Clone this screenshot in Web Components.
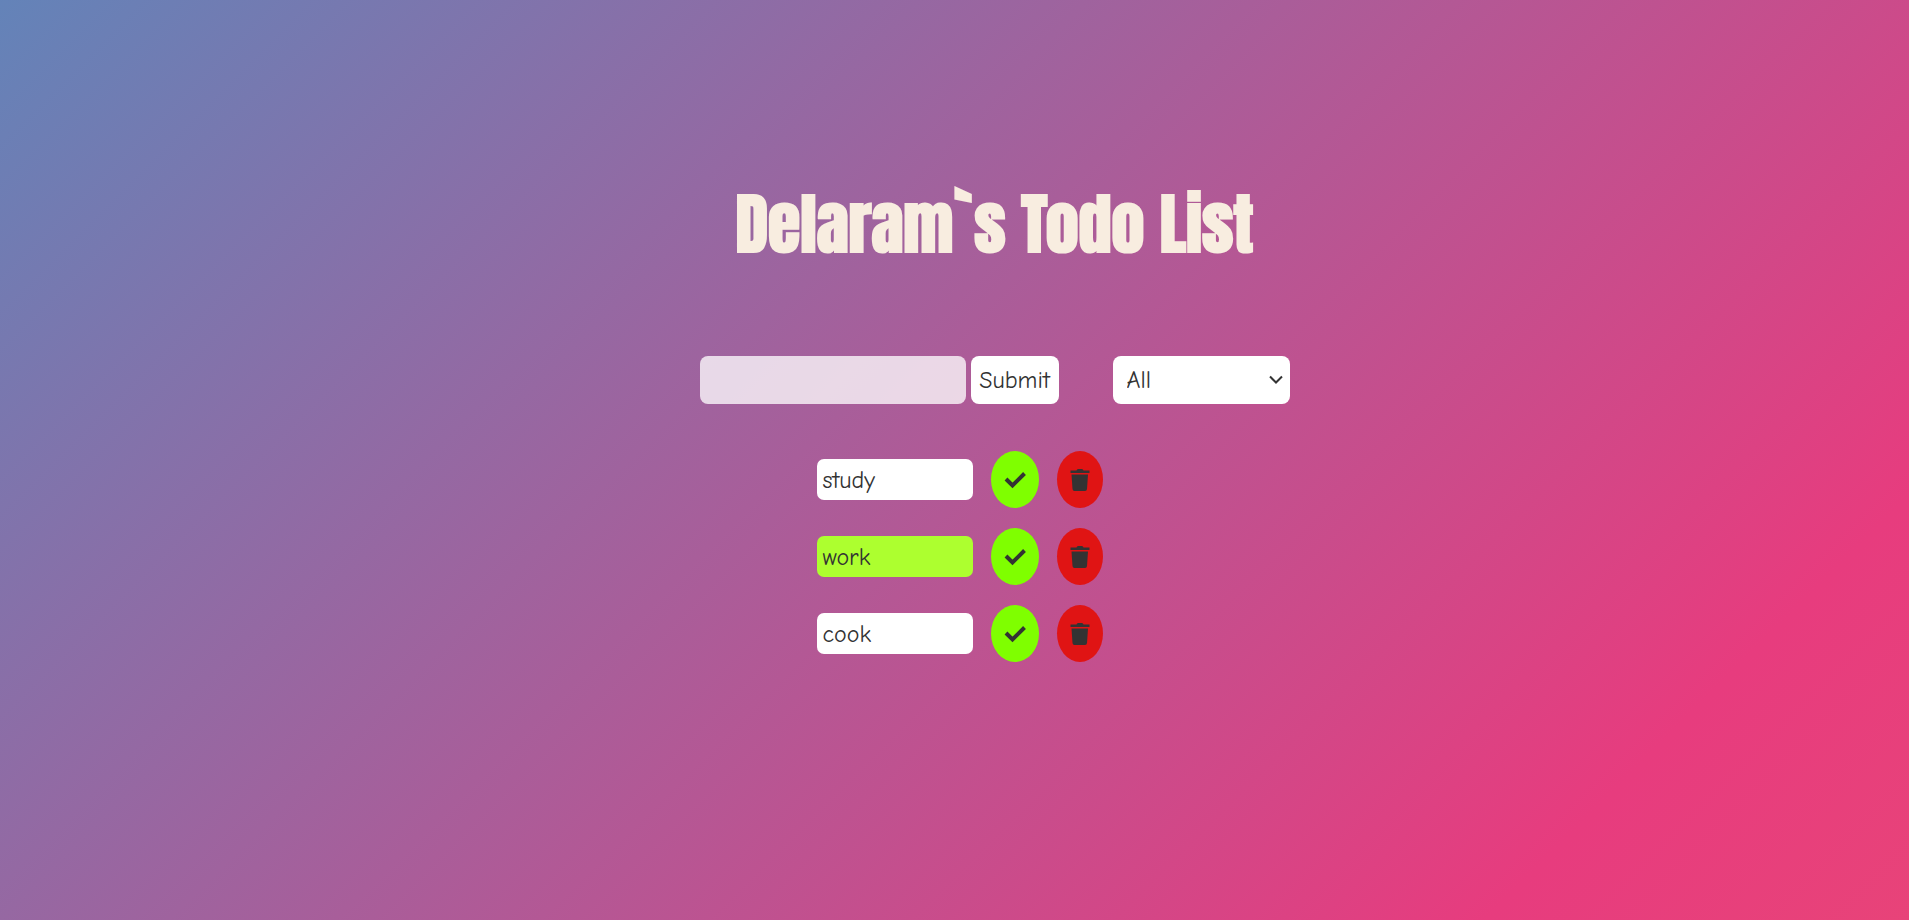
<!DOCTYPE html>
<html lang="en">
<head>
<meta charset="utf-8">
<meta name="viewport" content="width=device-width, initial-scale=1">
<title>Todo List</title>
<style>
  body {
    margin: 0;
    min-height: 100vh;
    color: #333;
    font: 24px/36px "Comic Neue", "Comic Sans MS", Lato, sans-serif;
    background: linear-gradient(-45deg, #ee7752, #e73c7e, #23a6d5, #23d5ab) 65% 50% / 380% 380%;
  }
</style>
</head>
<body>
<todo-app>
  <todo-title>Delaram`s Todo List</todo-title>
  <todo-form></todo-form>
  <todo-list>
    <todo-item>study</todo-item>
    <todo-item done>work</todo-item>
    <todo-item>cook</todo-item>
  </todo-list>
</todo-app>

<script>
  const define = (name, markup) => {
    const template = document.createElement('template');
    template.innerHTML = markup;
    customElements.define(name, class extends HTMLElement {
      constructor() {
        super();
        this.attachShadow({ mode: 'open' }).append(template.content.cloneNode(true));
      }
    });
  };

  define('todo-app', `
    <style>
      :host { display: flex; flex-direction: column; align-items: stretch; padding: 184px 0 48px; }
    </style>
    <slot></slot>`);

  define('todo-title', `
    <style>
      :host { display: block; padding-left: 80px; }
      h1 {
        margin: 0;
        text-align: center;
        color: #f8ede0;
        font: bold 66px/80px Anton, Impact, sans-serif;
      }
    </style>
    <h1><slot></slot></h1>`);

  define('todo-form', `
    <style>
      :host { display: block; padding: 92px 0 0 80px; }
      form { display: flex; justify-content: center; margin: 0; }
      input, button, select {
        box-sizing: border-box;
        height: 48px;
        border: 0;
        border-radius: 8px;
        margin: 0;
        font: inherit;
        color: inherit;
        background: #fff;
      }
      input { width: 266px; padding: 0 8px; background: rgb(255 255 255 / .76); }
      button { width: 88px; margin-left: 5px; padding: 0; }
      .filter { display: grid; width: 177px; margin-left: 54px; align-items: center; }
      .filter > * { grid-area: 1 / 1; }
      select { width: 100%; padding: 0 32px 0 14px; appearance: none; }
      svg { justify-self: end; margin-right: 6px; pointer-events: none; }
    </style>
    <form>
      <input type="text" aria-label="New task">
      <button type="button">Submit</button>
      <div class="filter">
        <select aria-label="Filter tasks">
          <option>All</option>
          <option>Completed</option>
          <option>Uncompleted</option>
        </select>
        <svg width="16" height="16" viewBox="0 0 16 16" fill="none" stroke="#333" stroke-width="2" aria-hidden="true"><path d="M2 4.5 8 10.500 14 4.500"/></svg>
      </div>
    </form>`);

  define('todo-list', `
    <style>
      :host { display: block; padding: 47px 0 0 10px; }
      div { display: flex; flex-direction: column; align-items: center; gap: 20px; }
    </style>
    <div role="list"><slot></slot></div>`);

  define('todo-item', `
    <style>
      :host { display: flex; align-items: center; }
      .text {
        box-sizing: border-box;
        width: 156px;
        padding: 3px 6px 2px;
        border-radius: 7px;
        background: #fff;
      }
      :host([done]) .text { background: #adff2f; }
      button {
        display: grid;
        place-items: center;
        height: 57px;
        border: 0;
        border-radius: 50%;
        margin: 0 0 0 18px;
        padding: 0;
        color: #333;
      }
      .check { width: 48px; background: #7fff00; }
      .trash { width: 46px; background: #e01414; }
    </style>
    <span class="text" role="listitem"><slot></slot></span>
    <button class="check" type="button" aria-label="Complete">
      <svg width="24" height="24" viewBox="0 0 24 24" fill="none" stroke="currentColor" stroke-width="4" aria-hidden="true"><path d="M3 11 9.500 17.500 21.500 5.500"/></svg>
    </button>
    <button class="trash" type="button" aria-label="Delete">
      <svg width="24" height="24" viewBox="0 0 24 24" fill="currentColor" aria-hidden="true"><path d="M2.500 2.500H8.500Q9 1 10 1H14Q15 1 15.500 2.500H21.500V5H2.500ZM3.500 6.500H20L19 21Q18.800 23 17 23H6.500Q4.700 23 4.500 21Z"/></svg>
    </button>`);
</script>
</body>
</html>
